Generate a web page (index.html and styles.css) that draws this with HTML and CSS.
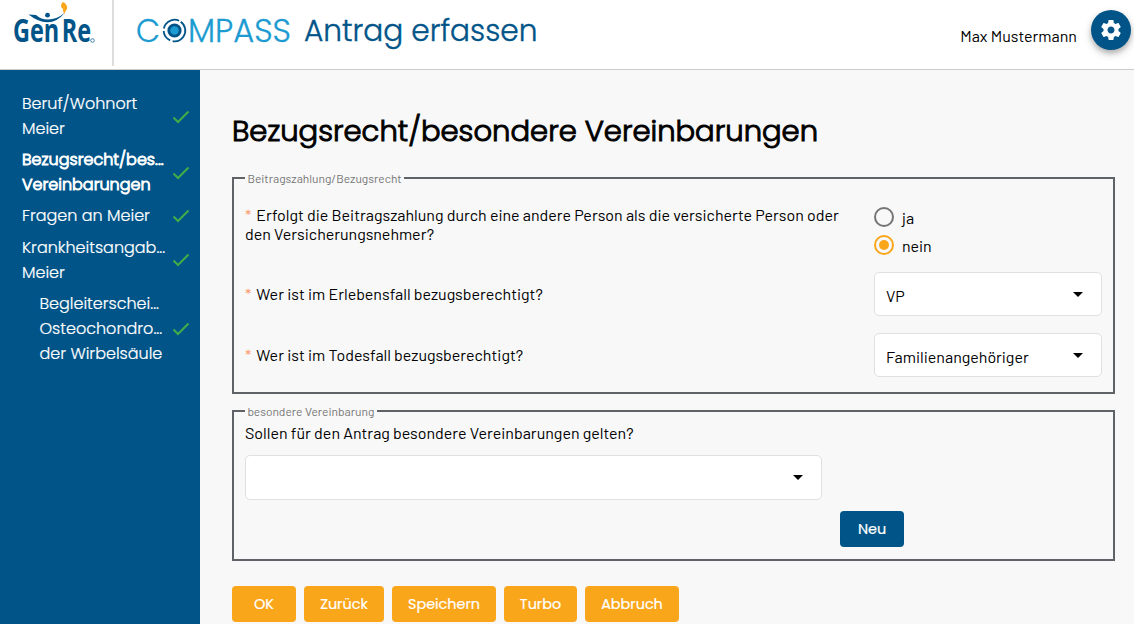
FILE: index.html
```html
<!DOCTYPE html>
<html lang="de">
<head>
    <meta charset="UTF-8">
    <meta name="viewport" content="width=device-width, initial-scale=1.0">
    <title>Antrag erfassen</title>
    <link rel="stylesheet" href="styles.css">
</head>
<body>
    <header class="header">
        <div class="brand">
            <svg class="brand-logo" width="112" height="60" viewBox="0 0 112 60">
                <text class="brand-text" x="13" y="42" textLength="78" lengthAdjust="spacingAndGlyphs">Gen Re</text>
                <circle cx="92.500" cy="40.500" r="1.800" fill="none" stroke="#005488" stroke-width="0.7"/>
                <path d="M28.500 14.500 L36 15 Q41 19.500 48 19.500 Q57 19.500 65 12.500 Q57 22.500 47 22.300 Q38 22 28.500 14.500Z" fill="#005488" stroke="#fff" stroke-width="1.200" paint-order="stroke"/>
                <circle cx="47.500" cy="15.200" r="2.400" fill="#005488"/>
                <path d="M63 2 C67 4 68.500 8 66 10.500 C65 12 64.500 12.500 65 14 C62 12 64 9.500 62 8 C60 6 61.500 3.500 63 2Z" fill="#faa61a"/>
            </svg>
        </div>
        <svg class="compass-logo" width="160" height="60" viewBox="0 0 160 60">
            <g class="compass-text">
                <text x="0" y="42" textLength="24" lengthAdjust="spacingAndGlyphs">C</text>
                <text x="52" y="42" textLength="103" lengthAdjust="spacingAndGlyphs">MPASS</text>
            </g>
            <circle cx="38.500" cy="30.500" r="10.800" fill="none" stroke="#005488" stroke-width="1.800" stroke-dasharray="29 2.500 12 2.500 19.500 2.350" transform="rotate(-55 38.500 30.500)"/>
            <circle cx="38.500" cy="30.500" r="5.700" fill="#1b9bd1" stroke="#005488" stroke-width="2.800"/>
        </svg>
        <div class="app-title">Antrag erfassen</div>
        <div class="user-name">Max Mustermann</div>
        <button class="settings-button" type="button" aria-label="Einstellungen">
            <svg width="24" height="24" viewBox="0 0 24 24"><path fill="#fff" d="M19.430 12.980c.04-.32.07-.64.07-.98s-.03-.66-.07-.98l2.110-1.650c.19-.15.24-.42.12-.64l-2-3.460c-.12-.22-.39-.3-.61-.22l-2.490 1c-.52-.4-1.080-.73-1.690-.98l-.38-2.650C14.460 2.180 14.250 2 14 2h-4c-.25 0-.46.18-.49.42l-.38 2.650c-.61.25-1.170.59-1.690.98l-2.490-1c-.23-.09-.49 0-.61.22l-2 3.460c-.13.22-.07.49.12.64l2.110 1.650c-.04.32-.07.65-.07.98s.03.66.07.98l-2.110 1.650c-.19.15-.24.42-.12.64l2 3.460c.12.22.39.3.61.22l2.490-1c.52.4 1.080.73 1.690.98l.38 2.650c.03.24.24.42.49.42h4c.25 0 .46-.18.49-.42l.38-2.650c.61-.25 1.170-.59 1.690-.98l2.490 1c.23.09.49 0 .61-.22l2-3.460c.12-.22.07-.49-.12-.64l-2.110-1.650zM12 15.500c-1.930 0-3.500-1.570-3.500-3.500s1.570-3.500 3.500-3.500 3.500 1.570 3.500 3.500-1.570 3.500-3.500 3.500z"/></svg>
        </button>
    </header>

    <div class="layout">
        <nav class="sidebar">
            <a class="nav-item">
                <span>Beruf/Wohnort<br>Meier</span>
                <svg class="check" width="18" height="14" viewBox="0 0 18 14"><path d="M1.500 7.500 6 12 16.500 1.500"/></svg>
            </a>
            <a class="nav-item active">
                <span>Bezugsrecht/bes...<br>Vereinbarungen</span>
                <svg class="check" width="18" height="14" viewBox="0 0 18 14"><path d="M1.500 7.500 6 12 16.500 1.500"/></svg>
            </a>
            <a class="nav-item">
                <span>Fragen an Meier</span>
                <svg class="check" width="18" height="14" viewBox="0 0 18 14"><path d="M1.500 7.500 6 12 16.500 1.500"/></svg>
            </a>
            <a class="nav-item">
                <span>Krankheitsangab...<br>Meier</span>
                <svg class="check" width="18" height="14" viewBox="0 0 18 14"><path d="M1.500 7.500 6 12 16.500 1.500"/></svg>
            </a>
            <a class="nav-item sub">
                <span>Begleiterschei...<br>Osteochondro...<br>der Wirbelsäule</span>
                <svg class="check" width="18" height="14" viewBox="0 0 18 14"><path d="M1.500 7.500 6 12 16.500 1.500"/></svg>
            </a>
        </nav>

        <main class="content">
            <h1>Bezugsrecht/besondere Vereinbarungen</h1>

            <fieldset class="payment">
                <legend>Beitragszahlung/Bezugsrecht</legend>
                <div class="form-row top">
                    <label><span class="required">*</span>Erfolgt die Beitragszahlung durch eine andere Person als die versicherte Person oder<br>den Versicherungsnehmer?</label>
                    <div class="radio-group">
                        <div class="radio"><i></i><span>ja</span></div>
                        <div class="radio checked"><i></i><span>nein</span></div>
                    </div>
                </div>
                <div class="form-row">
                    <label><span class="required">*</span>Wer ist im Erlebensfall bezugsberechtigt?</label>
                    <div class="select">VP</div>
                </div>
                <div class="form-row">
                    <label><span class="required">*</span>Wer ist im Todesfall bezugsberechtigt?</label>
                    <div class="select">Familienangehöriger</div>
                </div>
            </fieldset>

            <fieldset class="agreement">
                <legend>besondere Vereinbarung</legend>
                <label>Sollen für den Antrag besondere Vereinbarungen gelten?</label>
                <div class="select wide"></div>
                <button class="btn btn-new" type="button">Neu</button>
            </fieldset>

            <div class="actions">
                <button class="btn ok" type="button">OK</button>
                <button class="btn back" type="button">Zurück</button>
                <button class="btn save" type="button">Speichern</button>
                <button class="btn turbo" type="button">Turbo</button>
                <button class="btn cancel" type="button">Abbruch</button>
            </div>
        </main>
    </div>
</body>
</html>
```
FILE: styles.css
```css
* {
    box-sizing: border-box;
}
body {
    margin: 0;
    height: 624px;
    overflow: hidden;
    background-color: #f8f8f8;
    color: #000;
    font-family: Barlow, Roboto, sans-serif;
    font-size: 16px;
}
.header {
    display: flex;
    height: 70px;
    background-color: #fff;
    border-bottom: 1px solid #ccc;
}
.brand {
    width: 114px;
    height: 66px;
    border-right: 2px solid #ddd;
}
.brand-text {
    fill: #005488;
    font-family: "Open Sans", sans-serif;
    font-size: 32px;
    font-weight: 700;
    word-spacing: -5px;
}
.compass-logo {
    margin-left: 22px;
}
.compass-text {
    fill: #1b9bd1;
    stroke: #1b9bd1;
    stroke-width: 0.3;
    font-family: Poppins, Inter, sans-serif;
    font-size: 33px;
    font-weight: 300;
}
.app-title {
    margin-left: 8px;
    color: #005488;
    font-family: Poppins, Inter, sans-serif;
    font-size: 29.6px;
    font-weight: 300;
    line-height: 62px;
    -webkit-text-stroke: 0.4px #005488;
}
.user-name {
    margin-left: auto;
    line-height: 71px;
}
.settings-button {
    display: flex;
    align-items: center;
    justify-content: center;
    width: 40px;
    height: 40px;
    margin: 10px 3px 0 14px;
    padding: 0;
    border: none;
    border-radius: 50%;
    background-color: #005488;
    box-shadow: 0 3px 5px rgba(0, 0, 0, 0.2), 0 4px 10px rgba(0, 0, 0, 0.16);
}
.layout {
    display: flex;
    height: 554px;
}
.sidebar {
    width: 200px;
    padding: 21px 10px 0 22px;
    background-color: #005488;
    color: #fff;
    font-family: Poppins, Inter, sans-serif;
    font-weight: 300;
    line-height: 25px;
    -webkit-text-stroke: 0.2px #fff;
}
.nav-item {
    display: flex;
    align-items: center;
    justify-content: space-between;
    margin-bottom: 6.2px;
    white-space: nowrap;
}
.nav-item.active {
    -webkit-text-stroke: 0.9px #fff;
}
.nav-item.sub {
    padding-left: 17.5px;
}
.check {
    flex: none;
    margin-top: 1px;
    fill: none;
    stroke: #3fae49;
    stroke-width: 2;
}
.content {
    flex: 1;
    padding: 0 19px 0 32px;
}
h1 {
    margin: 39px 0 0;
    font-family: Poppins, Inter, sans-serif;
    font-size: 29.05px;
    font-weight: 300;
    line-height: 44px;
    white-space: nowrap;
    -webkit-text-stroke: 1px #000;
}
fieldset {
    margin: 0;
    padding: 0 11px;
    border: 2px solid #5f6368;
}
legend {
    padding: 0 2.4px;
    color: #757575;
    font-size: 12px;
    line-height: 14px;
}
label {
    line-height: 19px;
    white-space: nowrap;
}
.required {
    margin-right: 5px;
    color: #f99b6b;
}
.payment {
    height: 223px;
    margin-top: 18px;
    padding-top: 21px;
}
.form-row {
    display: grid;
    grid-template-columns: 629px 228px;
    align-items: center;
    margin-bottom: 17px;
}
.form-row.top {
    align-items: start;
}
.form-row label {
    margin-top: -2px;
}
.form-row.top label {
    margin-top: -1px;
}
.radio-group {
    height: 52px;
    margin-top: -3px;
}
.radio {
    display: flex;
    align-items: center;
    gap: 8px;
    height: 28px;
}
.radio i {
    width: 20px;
    height: 20px;
    border: 2px solid #757575;
    border-radius: 50%;
}
.radio.checked i {
    padding: 3px;
    border-color: #faa61a;
    background: #faa61a content-box;
}
.select {
    display: flex;
    align-items: center;
    justify-content: space-between;
    height: 44px;
    padding: 2px 18px 0 11px;
    border: 1px solid #e0e0e0;
    border-radius: 5px;
    background-color: #fff;
}
.select::after {
    content: "";
    margin: -2px 0 0 auto;
    border: 5px solid transparent;
    border-top-color: #000;
    border-bottom: none;
}
.agreement {
    height: 157px;
    margin-top: 10px;
    padding-top: 5px;
}
.agreement label {
    display: block;
}
.select.wide {
    width: 577px;
    height: 45px;
    margin-top: 13px;
}
.btn {
    height: 36px;
    padding: 0;
    border: none;
    border-radius: 4px;
    background-color: #faa61a;
    color: #fff;
    font-family: Poppins, Inter, sans-serif;
    font-size: 14.4px;
    font-weight: 400;
    -webkit-text-stroke: 0.2px #fff;
}
.btn-new {
    display: block;
    width: 64px;
    margin: 11px 0 0 595px;
    background-color: #005488;
}
.actions {
    display: flex;
    gap: 8px;
    margin-top: 25px;
}
.ok {
    width: 64px;
}
.back {
    width: 80px;
}
.save {
    width: 104px;
}
.turbo {
    width: 73px;
}
.cancel {
    width: 94px;
}
```
